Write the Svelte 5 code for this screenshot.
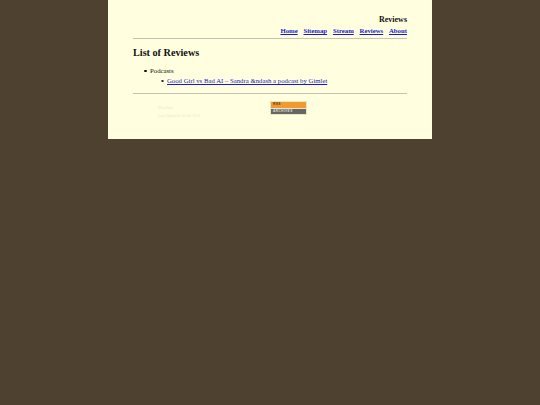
<script>
  const links = ["Home", "Sitemap", "Stream", "Reviews", "About"];
</script>

<div class="page">
  <header class="top">
    <div class="site">Reviews</div>
    <nav class="nav">
      {#each links as link}
        <a href="#top">{link}</a>
      {/each}
    </nav>
  </header>
  <hr />
  <h1>List of Reviews</h1>
  <ul class="outer">
    <li>
      Podcasts
      <ul class="inner">
        <li><a href="#top">Good Girl vs Bad AI – Sandra &amp;ndash a podcast by Gimlet</a></li>
      </ul>
    </li>
  </ul>
  <hr />
  <footer class="foot">
    <div class="meta">
      <p>Metadata</p>
      <p>Last Updated: 05 Jul 2018</p>
    </div>
    <div class="badge">
      <span class="b-top">RSS</span>
      <span class="b-bottom">ARCHIVES</span>
    </div>
  </footer>
</div>

<style>
  :global(body) {
    margin: 0;
    background: #4f4130;
    font-family: "Liberation Serif", "Times New Roman", serif;
  }

  .page {
    width: 274px;
    margin: 0 auto;
    padding: 14px 25px 18px;
    background: #ffffe0;
    color: #111;
    font-size: 6.75px;
  }

  .top {
    text-align: right;
  }

  .site {
    font-size: 8px;
    font-weight: 700;
    line-height: 11px;
  }

  .nav {
    display: flex;
    justify-content: flex-end;
    gap: 5.8px;
    font-weight: 700;
    line-height: 11px;
  }

  a {
    color: #1a1acc;
  }

  hr {
    height: 1px;
    margin: 2px 0 0;
    border: 0;
    background: #c4c4b4;
  }

  h1 {
    margin: 7px 0 0;
    font-size: 10.2px;
    line-height: 13px;
  }

  ul {
    margin: 0;
    padding-left: 17px;
    list-style: none;
  }

  .outer {
    margin-top: 7px;
    margin-bottom: 7px;
    line-height: 10px;
  }

  .outer li::before {
    content: "";
    display: inline-block;
    box-sizing: border-box;
    width: 2.5px;
    height: 2.5px;
    margin-left: -6px;
    margin-right: 3.5px;
    vertical-align: 1px;
    border-radius: 50%;
    background: #111;
  }

  .inner li::before {
    background: none;
    border: 0.5px solid #333;
  }

  .foot {
    display: flex;
    align-items: flex-start;
    padding-top: 7px;
  }

  .meta {
    width: 112px;
    padding-left: 25px;
    padding-top: 4px;
    color: #eaeacc;
    font-size: 4px;
  }

  .meta p {
    margin: 0 0 2px;
    line-height: 6px;
  }

  .badge {
    display: flex;
    flex-direction: column;
    gap: 1px;
    width: 35px;
    padding: 1px;
    background: #e8e8c0;
    font-family: "Liberation Sans", sans-serif;
    font-size: 3.2px;
    font-weight: 700;
    line-height: 5.5px;
    letter-spacing: 0.4px;
  }

  .b-top {
    padding-left: 2px;
    background: #f09a30;
    color: #4a3a20;
  }

  .b-bottom {
    padding-left: 2px;
    background: #666;
    color: #ddd;
  }
</style>
